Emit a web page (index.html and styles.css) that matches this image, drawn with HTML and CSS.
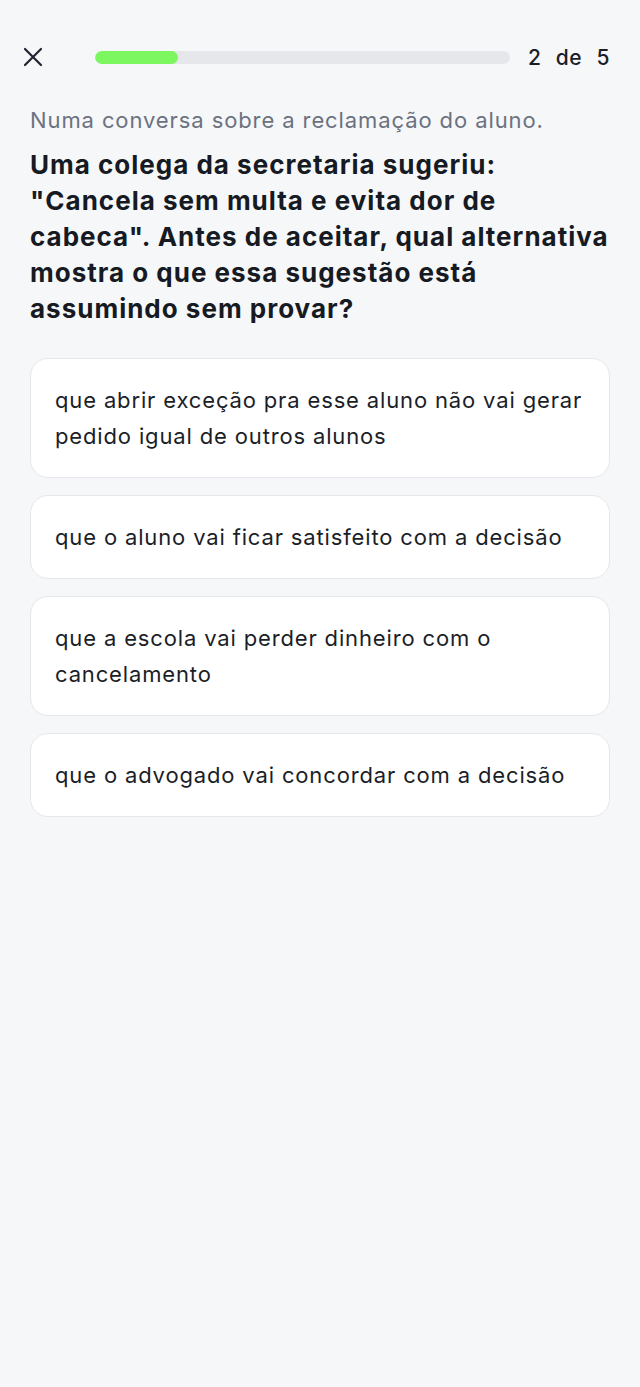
FILE: index.html
```html
<!DOCTYPE html>
<html lang="pt-BR">
<head>
    <meta charset="UTF-8">
    <meta name="viewport" content="width=device-width, initial-scale=1.0">
    <title>Pergunta 2 de 5</title>
    <link rel="stylesheet" href="styles.css">
</head>
<body>
    <div class="screen">
        <header class="topbar">
            <button class="close-btn" aria-label="Fechar">
                <svg width="22" height="22" viewBox="0 0 22 22" fill="none" stroke="#1f2430" stroke-width="2.2" stroke-linecap="round">
                    <path d="M3 3 L19 19 M19 3 L3 19"/>
                </svg>
            </button>
            <div class="progress">
                <div class="progress-fill" style="width: 20%"></div>
            </div>
            <span class="counter">2 de 5</span>
        </header>

        <p class="context">Numa conversa sobre a reclamação do aluno.</p>
        <h1 class="question">Uma colega da secretaria sugeriu: "Cancela sem multa e evita dor de cabeca". Antes de aceitar, qual alternativa mostra o que essa sugestão está assumindo sem provar?</h1>

        <div class="options">
            <button class="option">que abrir exceção pra esse aluno não vai gerar pedido igual de outros alunos</button>
            <button class="option">que o aluno vai ficar satisfeito com a decisão</button>
            <button class="option">que a escola vai perder dinheiro com o cancelamento</button>
            <button class="option">que o advogado vai concordar com a decisão</button>
        </div>
    </div>
</body>
</html>
```

FILE: styles.css
```css
* {
    margin: 0;
    padding: 0;
    box-sizing: border-box;
}

body {
    background-color: #f6f7f9;
    font-family: Inter, "Noto Sans", sans-serif;
    color: #1b1e27;
    min-height: 100vh;
}

.screen {
    padding: 0 30px;
}

.topbar {
    display: flex;
    align-items: center;
    height: 56px;
    margin-top: 29px;
}

.close-btn {
    background: none;
    border: none;
    width: 22px;
    height: 22px;
    margin-left: -8px;
    display: flex;
    cursor: pointer;
}

.progress {
    flex: 1;
    height: 13px;
    margin: 0 18px 0 51px;
    background-color: #e5e7eb;
    border-radius: 7px;
    overflow: hidden;
}

.progress-fill {
    height: 100%;
    background-color: #7cf760;
    border-radius: 7px;
}

.counter {
    font-size: 21px;
    font-weight: 500;
    letter-spacing: 0.6px;
    word-spacing: 8px;
    color: #1b1e27;
}

.context {
    margin-top: 20px;
    font-size: 22px;
    line-height: 30px;
    letter-spacing: 0.9px;
    color: #6b7280;
}

.question {
    margin-top: 12px;
    font-size: 26px;
    line-height: 36px;
    font-weight: 700;
    letter-spacing: 1px;
    color: #161a23;
}

.options {
    display: flex;
    flex-direction: column;
    gap: 17px;
    margin-top: 31px;
}

.option {
    display: block;
    width: 100%;
    text-align: left;
    background-color: #ffffff;
    border: 1px solid #e5e7eb;
    border-radius: 18px;
    padding: 23px 24px;
    font-family: Inter, "Noto Sans", sans-serif;
    font-size: 22px;
    line-height: 36px;
    letter-spacing: 0.85px;
    color: #1b1e27;
    cursor: pointer;
}
```
